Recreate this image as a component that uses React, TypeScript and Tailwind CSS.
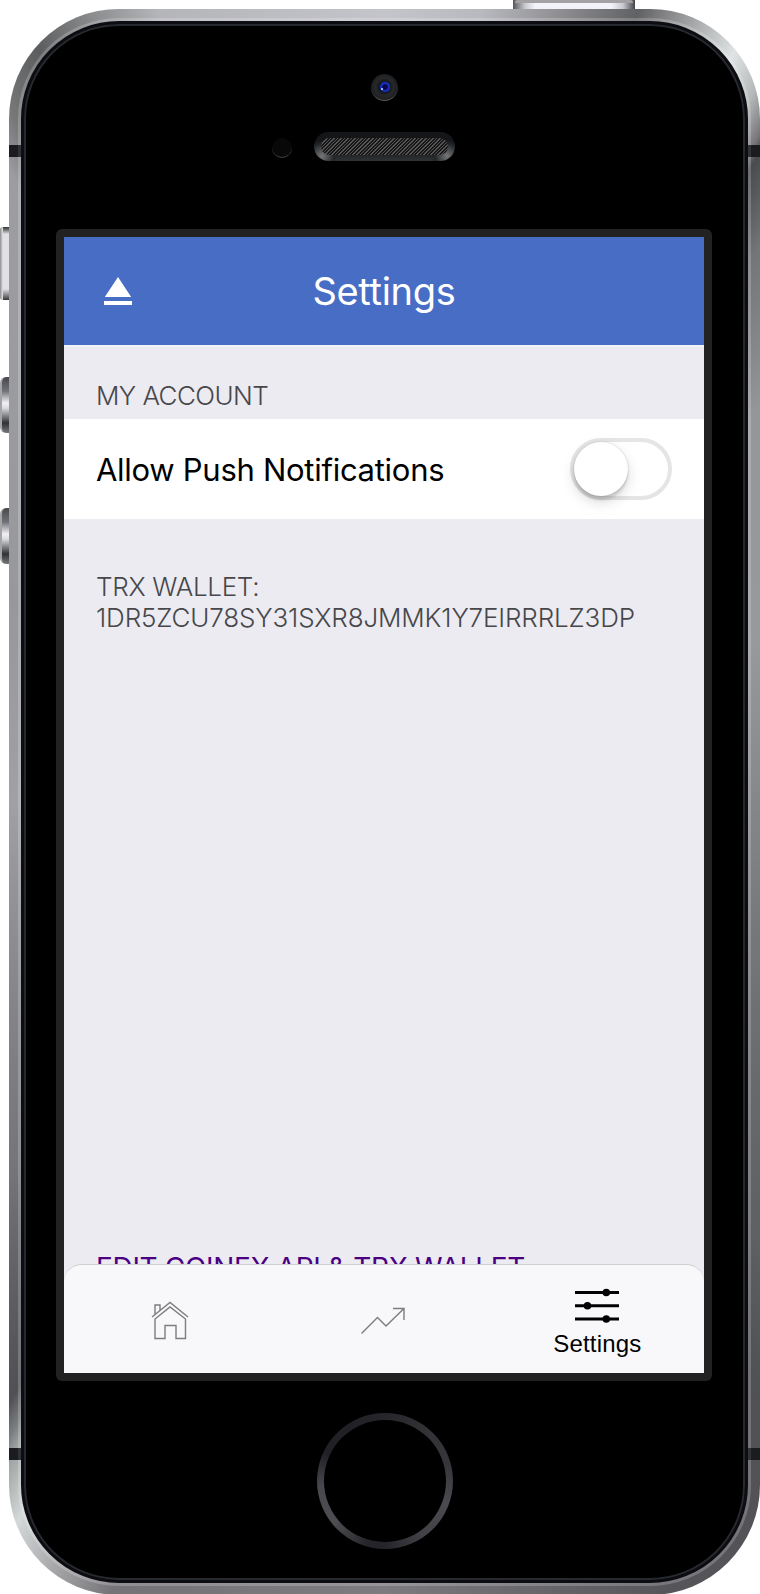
const rim =
  "bg-[conic-gradient(#c4c5ca_0deg,#b8b9be_7deg,#8f8f93_12.5deg,#606164_17.8deg,#8a8a8c_20deg,#dfe3e3_25deg,#b5b8b8_27.5deg,#777779_29.3deg,#4a4b4d_30deg,#747578_34deg,#95969a_43.5deg,#98999d_66.5deg,#5f6064_139.6deg,#505155_147.7deg,#56555a_160deg,#7d7b80_180deg,#757377_199deg,#a9a9ab_203.5deg,#d3d8d8_207deg,#9b9fa0_209.8deg,#7d8082_210.5deg,#505154_212deg,#74757a_225deg,#a0a1a6_270deg,#97989c_298deg,#9c9da1_329.3deg,#77787a_331.5deg,#5c5d5e_335.3deg,#8a8b8d_339.5deg,#b4b5b9_344deg,#c4c5ca_360deg)]";

function Hardware() {
  return (
    <>
      <div className="absolute left-[513px] top-0 h-[9px] w-[122px] bg-[linear-gradient(90deg,#55565a_0,#c9cacf_12px,#f2f3f8_22px,#f2f3f8_98px,#c9cacf_110px,#44454a_122px)]">
        <div className="mx-[2px] h-[3px] rounded-t-sm bg-[#a4a0a3]" />
      </div>
      <div className="absolute left-0 top-[227px] h-[73px] w-[9px] rounded-l-sm bg-[linear-gradient(180deg,#333_0,#77787a_3px,#e0e0e5_7px,#e0e0e5_62px,#777_69px,#333_73px)]">
        <div className="h-full w-[3px] rounded-l-sm bg-gradient-to-r from-[#8d8d91] to-[#e8e8ea]" />
      </div>
      <div className="absolute left-0 top-[377px] h-[56px] w-[9px] rounded-l-md border-l-2 border-[#a5a5a8] bg-[linear-gradient(180deg,#48484b_0,#707078_14px,#f1f1f4_26px,#dcdcde_31px,#303135_46px,#77787b_56px)]" />
      <div className="absolute left-0 top-[508px] h-[56px] w-[9px] rounded-l-md border-l-2 border-[#a5a5a8] bg-[linear-gradient(180deg,#48484b_0,#707078_14px,#f1f1f4_26px,#dcdcde_31px,#303135_46px,#77787b_56px)]" />
      <div className="absolute left-[9px] top-[145px] h-[12px] w-[12px] border-r-[3px] border-[#303235] bg-[#1b1c1f]" />
      <div className="absolute left-[748px] top-[145px] h-[12px] w-[12px] border-l-[3px] border-[#303235] bg-[#1b1c1f]" />
      <div className="absolute left-[9px] top-[1448px] h-[12px] w-[12px] border-r-[3px] border-[#303235] bg-[#1b1c1f]" />
      <div className="absolute left-[748px] top-[1448px] h-[12px] w-[12px] border-l-[3px] border-[#303235] bg-[#1b1c1f]" />
      <div className="absolute left-[371px] top-[74px] flex size-[27px] items-center justify-center rounded-full border-b border-[#55585a] bg-[radial-gradient(circle,#10151c_25%,#26282a_48%,#1b1c1d_75%)]">
        <div className="flex size-[10px] items-center justify-center rounded-full bg-[radial-gradient(circle,#0a0540_25%,#1636d8_60%,#0c1f82_100%)]">
          <div className="mr-[6px] mt-[3px] size-[2px] rounded-full bg-[#c9d9ff]" />
        </div>
      </div>
      <div className="absolute left-[272px] top-[138px] size-5 rounded-full border-b border-[#454747] bg-[#080808]" />
      <div className="absolute left-[314px] top-[132px] flex h-[29px] w-[141px] items-center justify-center rounded-full bg-[radial-gradient(circle_at_8px_24px,#777_0,#24272a_12px,transparent_16px),radial-gradient(circle_at_133px_24px,#777_0,#24272a_12px,transparent_16px),linear-gradient(180deg,#141618,#121417_55%,#303335)]">
        <div className="h-[17px] w-[127px] rounded-full bg-[repeating-linear-gradient(135deg,#171717_0,#171717_1.4px,#555_1.4px,#555_2.5px)]" />
      </div>
      <div className="absolute left-[317px] top-[1413px] size-[136px] rounded-full bg-[conic-gradient(#25252a_0deg,#333236_40deg,#36363a_75deg,#4b4a50_110deg,#424146_145deg,#25242a_180deg,#25242a_195deg,#4e4d51_230deg,#49484e_265deg,#202026_295deg,#202026_325deg,#25252a_360deg)] p-[7px]">
        <div className="size-full rounded-full bg-black" />
      </div>
    </>
  );
}

function HomeIcon() {
  return (
    <svg width="38" height="39" viewBox="0 0 38 39" fill="none" stroke="#7d7d7e" strokeWidth="1.4">
      <path d="M1 16 19 1.500 37 16M4 13V4H9V9M4 18V37.500H14V24.500H25V37.500H34.500V18L19 6Z" />
    </svg>
  );
}

function TrendIcon() {
  return (
    <svg width="44" height="28" viewBox="0 0 44 28" fill="none" stroke="#7d7d7e" strokeWidth="1.4">
      <path d="M.5 26.500 16.500 10.500 25 19 43 1.500M32 1.500H43V13" />
    </svg>
  );
}

function SlidersIcon() {
  return (
    <svg width="44" height="36" viewBox="0 0 44 36" fill="#000" stroke="#000" strokeWidth="3">
      <path d="M0 4.500H44M0 17.700H44M0 31H44" />
      <g stroke="none">
        <circle cx="31.300" cy="4.500" r="3.800" />
        <circle cx="12.500" cy="17.700" r="3.800" />
        <circle cx="31.300" cy="31" r="3.800" />
      </g>
    </svg>
  );
}

function Screen() {
  return (
    <div className="flex h-[1136px] flex-col overflow-hidden bg-[#ebebf1] font-[Inter,'Liberation_Sans',sans-serif]">
      <header className="grid h-[108px] shrink-0 grid-cols-3 items-center bg-[#486dc5] text-white">
        <svg className="ml-10" width="28" height="28" viewBox="0 0 28 28" fill="#fff">
          <path d="M14 0 27.200 20H.8ZM0 24H28V28H0Z" />
        </svg>
        <h1 className="text-center text-[38px] tracking-[-0.3px]">Settings</h1>
      </header>
      <main className="flex min-h-0 flex-1 flex-col overflow-hidden border-t-2 border-[#f1f2f3] text-[26px] font-light leading-[31px] text-[#47474a]">
        <h2 className="flex h-[72px] shrink-0 items-end px-8 pb-2 tracking-[-0.55px]">MY ACCOUNT</h2>
        <div className="flex h-[100px] shrink-0 items-center justify-between bg-white px-8 text-[31px] font-normal text-black">
          <span className="tracking-[-0.28px]">Allow Push Notifications</span>
          <div className="flex h-[62px] w-[102px] items-center rounded-full border-4 border-[#e5e5e5]">
            <div className="size-[54px] rounded-full bg-white shadow-[0_6px_14px_rgba(0,0,0,0.15),0_4px_3px_rgba(0,0,0,0.12),0_0_2px_rgba(0,0,0,0.2)]" />
          </div>
        </div>
        <p className="shrink-0 px-8 pt-[52px] tracking-[-0.14px]">
          <span className="tracking-[-0.3px]">TRX WALLET:</span>
          <br />
          1DR5ZCU78SY31SXR8JMMK1Y7EIRRRLZ3DP
        </p>
        <p className="mt-[620px] shrink-0 px-8 text-[28px] font-normal tracking-[-0.33px] text-[#4b0082]">
          EDIT COINEX API &amp; TRX WALLET
        </p>
      </main>
      <nav className="grid h-[109px] shrink-0 grid-cols-3 rounded-t-[18px] border-t border-[#cfcfd1] bg-[#f8f8fa]">
        <div className="flex items-center justify-center pr-[2px] pt-[2px]"><HomeIcon /></div>
        <div className="flex items-center justify-center pr-[2px] pt-[3px]"><TrendIcon /></div>
        <div className="flex flex-col items-center pt-[23px]">
          <SlidersIcon />
          <span className="mt-[6px] font-['Liberation_Sans',sans-serif] text-[24px] leading-[27px] tracking-[0.15px] text-black">Settings</span>
        </div>
      </nav>
    </div>
  );
}

export default function App() {
  return (
    <div className="relative h-[1594px] w-[760px] overflow-hidden bg-white pl-[9px] pt-[9px]">
      <div className={`h-[1586px] w-[751px] rounded-[110px] p-[9px] ${rim}`}>
        <div className="h-full rounded-[101px] bg-white/20 p-[3px]">
          <div className="h-full rounded-[98px] border-[3px] border-[#0c0c12] bg-black">
            <div className="h-full rounded-[95px] border-2 border-[#262a2e] pl-[30px] pr-[31px] pt-[203px]">
              <div className="rounded-[6px] bg-[#222] p-2">
                <Screen />
              </div>
            </div>
          </div>
        </div>
      </div>
      <Hardware />
    </div>
  );
}
